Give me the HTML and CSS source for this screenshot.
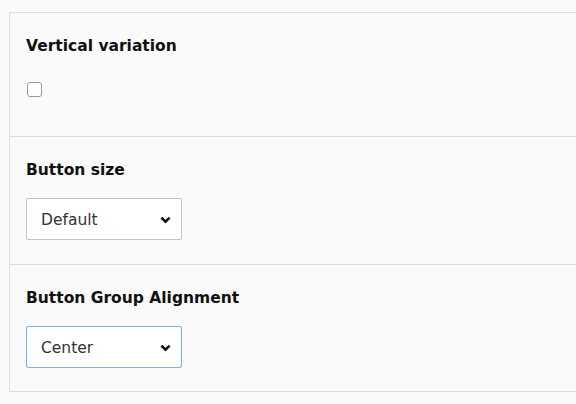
FILE: index.html
```html
<!DOCTYPE html>
<html>
<head>
<meta charset="utf-8">
<link rel="stylesheet" href="styles.css">
</head>
<body>
<div class="panel">
  <div class="section">
    <div class="label">Vertical variation</div>
    <div class="check-row"><span class="checkbox"></span></div>
  </div>
  <div class="section">
    <div class="label">Button size</div>
    <div class="select"><span class="value">Default</span>
      <svg class="chev" width="11" height="8" viewBox="0 0 11 8"><path d="M1.4 1.6 L5.5 5.6 L9.6 1.6" fill="none" stroke="#111" stroke-width="2.6"/></svg>
    </div>
  </div>
  <div class="section">
    <div class="label">Button Group Alignment</div>
    <div class="select focus"><span class="value">Center</span>
      <svg class="chev" width="11" height="8" viewBox="0 0 11 8"><path d="M1.4 1.6 L5.5 5.6 L9.6 1.6" fill="none" stroke="#111" stroke-width="2.6"/></svg>
    </div>
  </div>
</div>
</body>
</html>
```
FILE: styles.css
```css
html, body {
  margin: 0;
  padding: 0;
  background: #fafafa;
}
body {
  padding: 12px 0 0 9px;
  font-family: "DejaVu Sans", Verdana, sans-serif;
  color: #111;
}
.panel {
  border: 1px solid #dcdcdc;
  border-right: none;
  background: #fafafa;
}
.section {
  padding: 23px 16px 24px 16px;
  border-top: 1px solid #dcdcdc;
}
.section:first-child {
  border-top: none;
}
.section:last-child {
  padding-bottom: 23px;
}
.label {
  font-weight: bold;
  font-size: 15.5px;
  line-height: 20px;
  color: #111;
}
.check-row {
  margin-top: 26px;
  height: 16px;
  margin-bottom: 14px;
}
.checkbox {
  display: block;
  width: 13px;
  height: 13px;
  border: 1.5px solid #9a9a9a;
  border-radius: 3px;
  background: #fff;
  margin-left: 1px;
}
.select {
  margin-top: 18px;
  width: 154px;
  height: 40px;
  border: 1px solid #c4c4c4;
  border-radius: 2px;
  background: #fff;
  display: flex;
  align-items: center;
  justify-content: space-between;
}
.select.focus {
  border-color: #7aaee6;
}
.value {
  font-size: 15.5px;
  color: #333;
  padding-left: 14px;
  padding-top: 2px;
}
.chev {
  margin-right: 10px;
  margin-top: 2px;
}
```
